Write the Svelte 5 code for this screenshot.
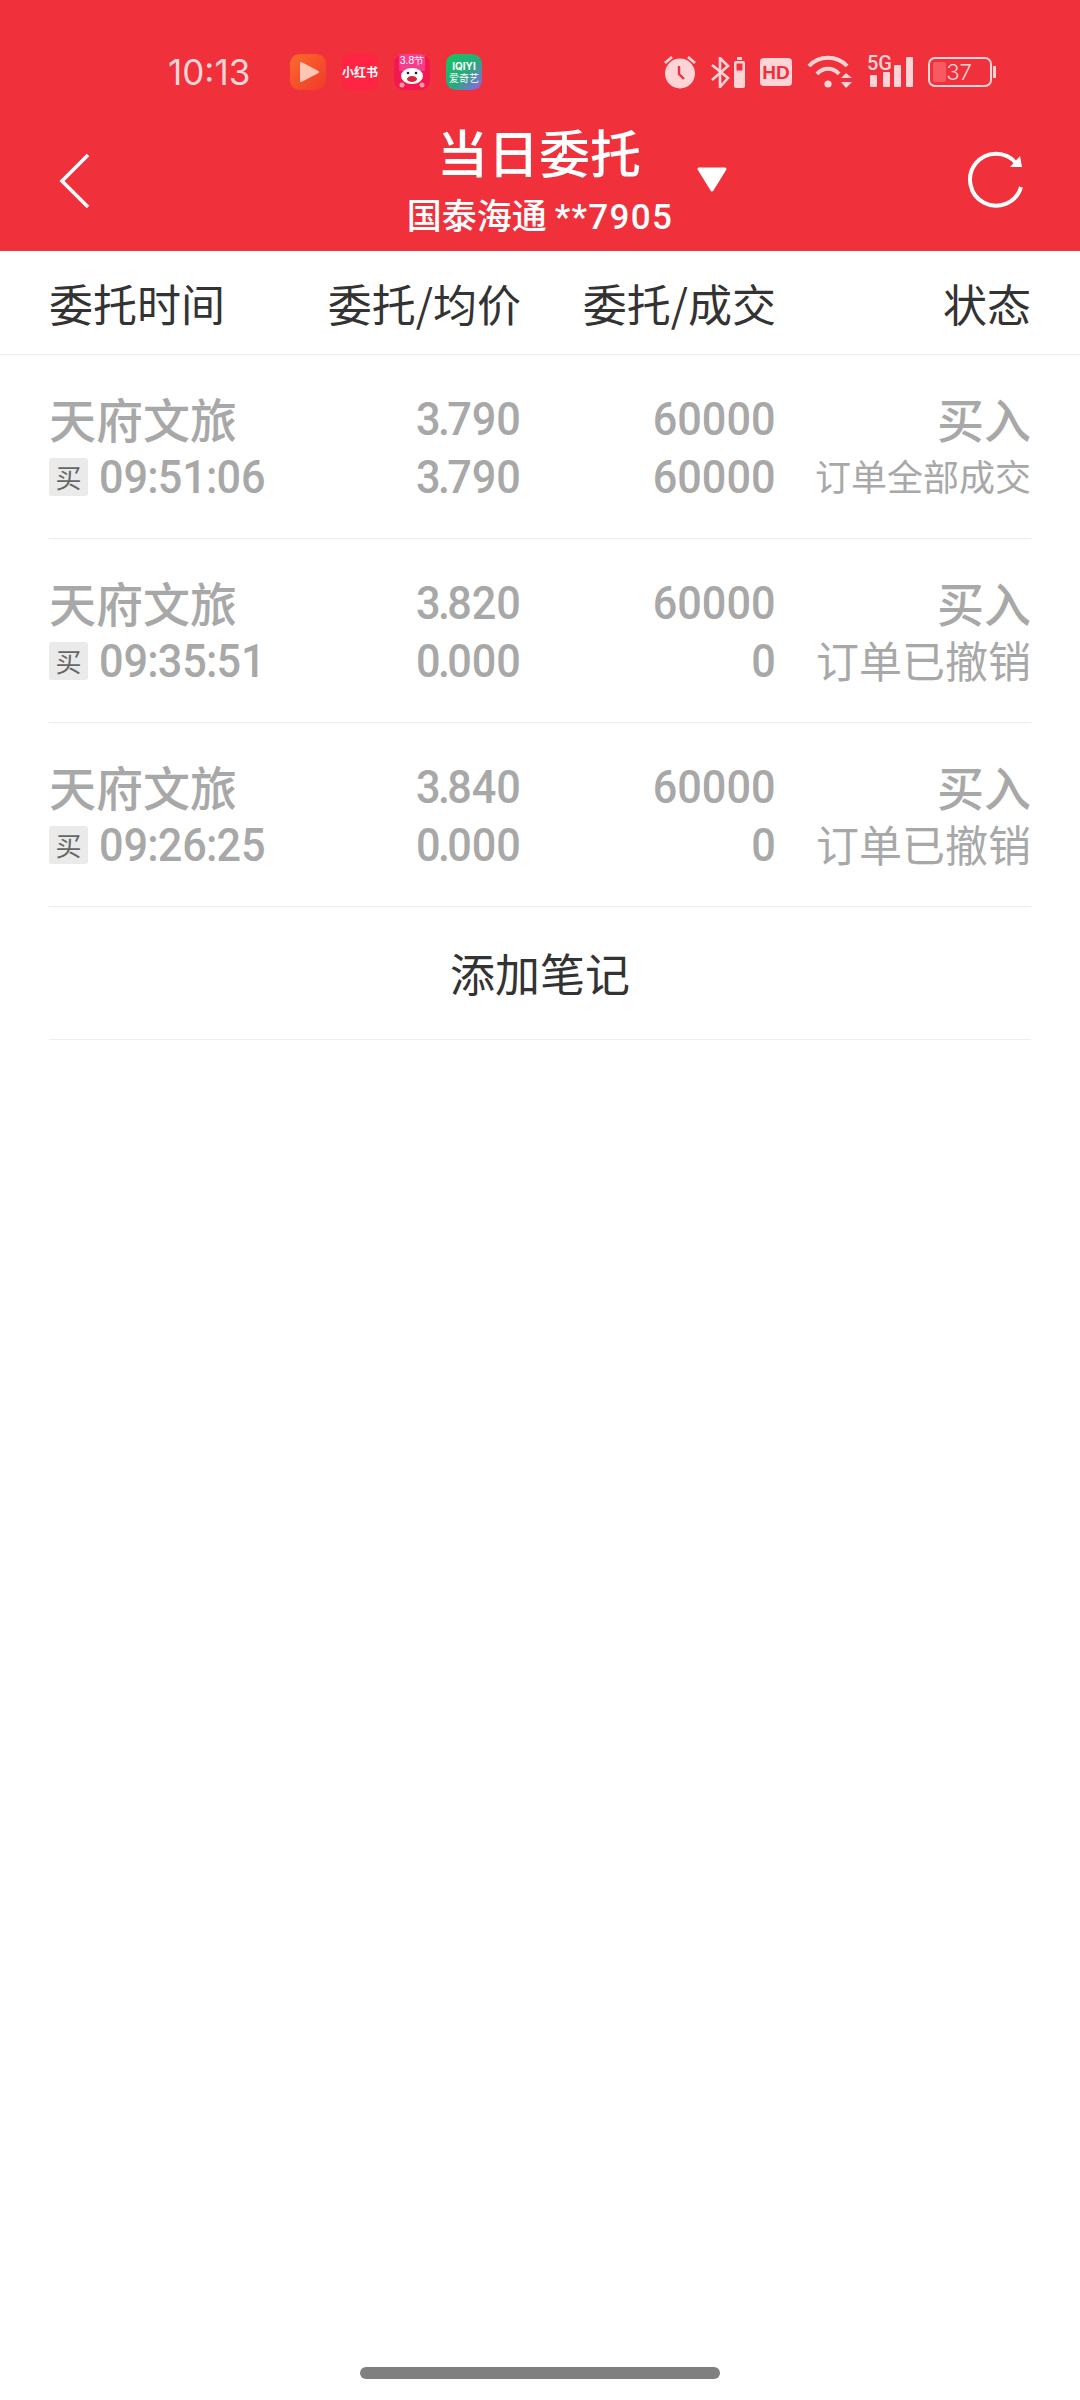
<script>
  const orders = [
    { name: "天府文旅", time: "09:51:06", price: "3.790", avg: "3.790", qty: "60000", filled: "60000", side: "买入", status: "订单全部成交", small: true },
    { name: "天府文旅", time: "09:35:51", price: "3.820", avg: "0.000", qty: "60000", filled: "0", side: "买入", status: "订单已撤销", small: false },
    { name: "天府文旅", time: "09:26:25", price: "3.840", avg: "0.000", qty: "60000", filled: "0", side: "买入", status: "订单已撤销", small: false }
  ];
</script>

{#snippet digits(value, cls = "")}
  <span class="num {cls}">{#each value.split("") as ch}<span class:dot={ch === "."} class:colon={ch === ":"}>{ch}</span>{/each}</span>
{/snippet}

<div class="page">
  <header class="top">
    <div class="status">
      <span class="clock">10:13</span>
      <div class="apps">
        <svg class="app" viewBox="0 0 36 36">
          <defs>
            <linearGradient id="g1" x1="0" y1="0" x2="1" y2="1"><stop offset="0" stop-color="#fb6a2c" /><stop offset="1" stop-color="#f0392a" /></linearGradient>
          </defs>
          <rect width="36" height="36" rx="9" fill="url(#g1)" />
          <path d="M11 9 L28 18 L11 27 Z" fill="#ffc6b4" stroke="#ffc6b4" stroke-width="2" stroke-linejoin="round" />
        </svg>
        <div class="app xhs">小红书</div>
        <svg class="app" viewBox="0 0 36 36">
          <rect width="36" height="36" rx="9" fill="#f3184f" />
          <rect x="5" y="0" width="26" height="17" fill="#f53d8c" />
          <text x="18" y="10" text-anchor="middle" font-size="10" fill="#fff" font-family="Inter, sans-serif">3.8节</text>
          <ellipse cx="18" cy="22" rx="11" ry="8" fill="#fff" />
          <ellipse cx="18" cy="25" rx="5" ry="3" fill="#d8263a" />
          <circle cx="14" cy="19" r="1.3" fill="#222" />
          <circle cx="22" cy="19" r="1.3" fill="#222" />
          <circle cx="8" cy="31" r="2.5" fill="#ff9a9a" />
          <circle cx="28" cy="31" r="2.5" fill="#ff9a9a" />
        </svg>
        <svg class="app" viewBox="0 0 36 36">
          <defs>
            <linearGradient id="g2" x1="0" y1="0" x2="1" y2="1"><stop offset="0" stop-color="#12c75f" /><stop offset="0.55" stop-color="#2aa87e" /><stop offset="1" stop-color="#9a5cf5" /></linearGradient>
          </defs>
          <rect width="36" height="36" rx="9" fill="url(#g2)" />
          <text x="18" y="16" text-anchor="middle" font-size="10" font-weight="700" fill="#fff" font-family="Inter, sans-serif">IQIYI</text>
          <text x="18" y="28" text-anchor="middle" font-size="10" fill="#fff" font-family="'Noto Sans CJK SC', sans-serif">爱奇艺</text>
        </svg>
      </div>
      <div class="sys">
        <svg width="32" height="34" viewBox="0 0 32 34">
          <circle cx="16" cy="18.5" r="15" fill="#ffd4d6" />
          <path d="M15 11 V19 L20 24" fill="none" stroke="#f0303a" stroke-width="2.4" />
          <path d="M1 8 L8 2 M31 8 L24 2" stroke="#ffd4d6" stroke-width="2.8" />
        </svg>
        <svg width="34" height="31" viewBox="0 0 34 31">
          <path d="M1 8 L17 21 L9 30 V1 L17 9 L1 23" fill="none" stroke="#ffd4d6" stroke-width="2.6" />
          <rect x="23" y="4" width="11" height="27" rx="2" fill="#ffd4d6" />
          <rect x="26" y="0" width="5" height="3" fill="#ffd4d6" />
          <rect x="25.5" y="6.5" width="6" height="7" fill="#f0303a" />
        </svg>
        <svg width="32" height="28" viewBox="0 0 32 28">
          <rect width="32" height="28" rx="4" fill="#ffd4d6" />
          <text x="16" y="21" text-anchor="middle" font-size="19" font-weight="700" fill="#f0303a" font-family="'Liberation Sans', sans-serif">HD</text>
        </svg>
        <svg width="45" height="34" viewBox="0 0 45 34">
          <path d="M2 11 C12 0 30 0 40 11" fill="none" stroke="#ffd4d6" stroke-width="4" />
          <path d="M10 19 C16 12 26 12 32 19" fill="none" stroke="#ffd4d6" stroke-width="4" />
          <circle cx="21" cy="29" r="3.6" fill="#ffd4d6" />
          <path d="M34 23 L39 18 L45 23 Z M34 27 L45 27 L39 33 Z" fill="#ffd4d6" />
        </svg>
        <div class="signal">
          <span class="five">5G</span>
          <svg width="46" height="30" viewBox="0 0 46 30">
            <rect x="3" y="18" width="7" height="12" rx="1" fill="#ffd4d6" />
            <rect x="16" y="15" width="7" height="15" rx="1" fill="#ffd4d6" />
            <rect x="27" y="8" width="7" height="22" rx="1" fill="#ffd4d6" />
            <rect x="39" y="0" width="7" height="30" rx="1" fill="#ffd4d6" />
          </svg>
        </div>
        <div class="batt">
          <div class="shell">
            <div class="level"></div>
            <span>37</span>
          </div>
          <div class="nub"></div>
        </div>
      </div>
    </div>

    <div class="nav">
      <svg class="back" width="32" height="56" viewBox="0 0 32 56">
        <path d="M30 2 L4 28 L30 54" fill="none" stroke="#fff" stroke-width="3.6" />
      </svg>
      <div class="heading">
        <div class="title">当日委托</div>
        <div class="acct">国泰海通 <span class="mask">**7905</span></div>
      </div>
      <svg class="caret" width="30" height="25" viewBox="0 0 30 25"><path d="M2 2 H28 L15 23 Z" fill="#fff" stroke="#fff" stroke-width="3" stroke-linejoin="round" /></svg>
      <svg class="refresh" width="60" height="60" viewBox="0 0 60 60">
        <path d="M49 12 A26 26 0 1 0 54 36" fill="none" stroke="#fff" stroke-width="4" />
        <path d="M43 16 L55 16 L53 5 Z" fill="#fff" />
      </svg>
    </div>
  </header>

  <div class="thead">
    <span>委托时间</span>
    <span class="end">委托/均价</span>
    <span class="end">委托/成交</span>
    <span class="end">状态</span>
  </div>

  <div class="list">
    {#each orders as o}
      <div class="row">
        <div>
          <div class="name">{o.name}</div>
          <div class="when"><span class="tag">买</span>{@render digits(o.time, "left")}</div>
        </div>
        <div class="end vals">
          <div>{@render digits(o.price)}</div>
          <div>{@render digits(o.avg)}</div>
        </div>
        <div class="end vals">
          <div>{@render digits(o.qty)}</div>
          <div>{@render digits(o.filled)}</div>
        </div>
        <div class="end stat">
          <div class="side">{o.side}</div>
          <div class="state" class:small={o.small}>{o.status}</div>
        </div>
      </div>
    {/each}
    <div class="note">添加笔记</div>
  </div>
  <div class="home"></div>
</div>

<style>
  :global(body) {
    margin: 0;
    background: #fff;
  }
  .page {
    position: relative;
    width: 1080px;
    height: 2400px;
    background: #fff;
    font-family: "Noto Sans CJK SC", "Noto Sans", sans-serif;
    overflow: hidden;
  }
  .top {
    background: #f0303a;
    height: 251px;
    color: #fff;
  }
  .status {
    display: flex;
    align-items: center;
    height: 36px;
    padding: 54px 0 0 168px;
  }
  .clock {
    width: 122px;
    font-family: Inter, sans-serif;
    font-size: 35px;
    color: #ffd4d6;
  }
  .apps {
    display: flex;
    gap: 16px;
  }
  .app {
    display: block;
    width: 36px;
    height: 36px;
    border-radius: 9px;
  }
  .xhs {
    background: #ff2442;
    font-size: 12px;
    font-weight: 700;
    line-height: 36px;
    text-align: center;
    white-space: nowrap;
  }
  .sys {
    display: flex;
    align-items: center;
    gap: 15px;
    margin-left: 182px;
  }
  .signal {
    position: relative;
    width: 46px;
    height: 30px;
  }
  .signal svg {
    display: block;
  }
  .five {
    position: absolute;
    left: 0;
    top: -2px;
    font-family: Roboto, sans-serif;
    font-size: 20px;
    font-weight: 500;
    line-height: 16px;
    color: #ffd4d6;
  }
  .batt {
    display: flex;
    align-items: center;
    gap: 1px;
  }
  .shell {
    position: relative;
    box-sizing: border-box;
    width: 64px;
    height: 30px;
    padding: 3px;
    border: 2px solid #ffd4d6;
    border-radius: 7px;
  }
  .level {
    width: 13px;
    height: 100%;
    background: #f75a62;
    border-radius: 2px;
  }
  .shell span {
    position: absolute;
    inset: 0 2px 0 0;
    font-family: Inter, sans-serif;
    font-size: 22px;
    font-weight: 300;
    line-height: 26px;
    text-align: center;
    color: #ffd4d6;
  }
  .nub {
    width: 3px;
    height: 12px;
    background: #ffd4d6;
  }
  .nav {
    position: relative;
    height: 161px;
  }
  .back {
    position: absolute;
    left: 58px;
    top: 63px;
  }
  .heading {
    text-align: center;
    padding-top: 32px;
  }
  .title {
    padding-right: 2px;
    font-size: 51px;
    font-weight: 500;
    line-height: 58px;
  }
  .acct {
    font-size: 35px;
    font-weight: 500;
    line-height: 40px;
    margin-top: 14px;
  }
  .mask {
    font-family: Roboto, sans-serif;
    letter-spacing: 1.3px;
  }
  .caret {
    position: absolute;
    left: 697px;
    top: 77px;
  }
  .refresh {
    position: absolute;
    left: 967px;
    top: 61px;
  }
  .thead {
    display: grid;
    grid-template-columns: 218px 254px 255px 255px;
    align-items: center;
    height: 103px;
    padding: 0 49px;
    border-bottom: 1px solid #eeeeee;
    font-size: 44px;
    color: #333;
  }
  .thead span {
    white-space: nowrap;
  }
  .end {
    text-align: right;
  }
  .list {
    padding: 0 49px;
  }
  .row {
    display: grid;
    grid-template-columns: 218px 254px 255px 255px;
    align-items: center;
    height: 183px;
    border-bottom: 1px solid #eeeeee;
    color: #a8a8a8;
  }
  .vals {
    margin-top: 3px;
  }
  .num {
    display: inline-block;
    font-family: Roboto, sans-serif;
    font-size: 47px;
    font-weight: 500;
    line-height: 58px;
    transform: scaleX(0.92);
    transform-origin: right center;
  }
  .num.left {
    transform-origin: left center;
  }
  .dot {
    margin: 0 -3px;
  }
  .colon {
    margin: 0 -1px;
  }
  .name {
    font-size: 47px;
    font-weight: 500;
    line-height: 60px;
    white-space: nowrap;
  }
  .when {
    display: flex;
    align-items: center;
    gap: 11px;
    white-space: nowrap;
  }
  .tag {
    flex: none;
    width: 39px;
    height: 38px;
    background: #eaeaea;
    border-radius: 3px;
    color: #666;
    font-size: 26px;
    line-height: 38px;
    text-align: center;
  }
  .stat {
    margin-bottom: 3px;
  }
  .side {
    font-size: 47px;
    font-weight: 500;
    line-height: 60px;
  }
  .state {
    height: 54px;
    font-size: 43px;
    line-height: 54px;
    white-space: nowrap;
  }
  .state.small {
    font-size: 36px;
  }
  .note {
    height: 132px;
    line-height: 132px;
    text-align: center;
    font-size: 45px;
    color: #333;
    border-bottom: 1px solid #eeeeee;
  }
  .home {
    position: absolute;
    left: 360px;
    top: 2367px;
    width: 360px;
    height: 12px;
    border-radius: 6px;
    background: #7f7f7f;
  }
</style>
